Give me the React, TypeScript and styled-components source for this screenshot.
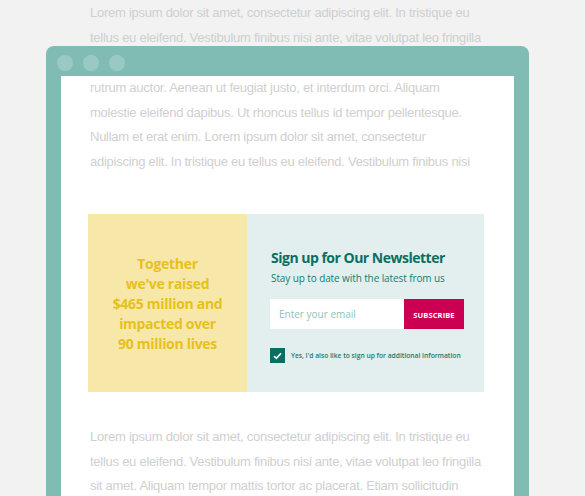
import React from 'react';
import styled, { createGlobalStyle } from 'styled-components';

const GlobalStyle = createGlobalStyle`
  html, body {
    margin: 0;
    padding: 0;
    background: #f2f2f2;
    overflow: hidden;
  }
  * {
    box-sizing: border-box;
  }
`;

const bodyFont = `"Liberation Sans", Arial, sans-serif`;
const headFont = `"Open Sans", "Noto Sans", sans-serif`;

const topLines = [
  'Lorem ipsum dolor sit amet, consectetur adipiscing elit. In tristique eu',
  'tellus eu eleifend. Vestibulum finibus nisi ante, vitae volutpat leo fringilla',
];

const innerLines = [
  'rutrum auctor. Aenean ut feugiat justo, et interdum orci. Aliquam',
  'molestie eleifend dapibus. Ut rhoncus tellus id tempor pellentesque.',
  'Nullam et erat enim. Lorem ipsum dolor sit amet, consectetur',
  'adipiscing elit. In tristique eu tellus eu eleifend. Vestibulum finibus nisi',
];

const bottomLines = [
  'Lorem ipsum dolor sit amet, consectetur adipiscing elit. In tristique eu',
  'tellus eu eleifend. Vestibulum finibus nisi ante, vitae volutpat leo fringilla',
  'sit amet. Aliquam tempor mattis tortor ac placerat. Etiam sollicitudin',
];

const Page = styled.div`
  height: 496px;
  overflow: hidden;
  font-family: ${bodyFont};
`;

const Copy = styled.div<{ top?: number }>`
  margin-top: ${({ top }) => top ?? 0}px;
  padding-left: 2px;
  font-size: 13px;
  line-height: 24.5px;
  letter-spacing: -0.26px;
  color: #cfcfcf;
  white-space: nowrap;
`;

const TopCopy = styled.div`
  padding: 1px 0 0 88px;
  height: 49px;
`;

const Frame = styled.div`
  position: relative;
  margin: -3px 0 0 46px;
  width: 483px;
  background: #80bcb4;
  border-radius: 8px 8px 0 0;
  padding: 0 15px;
`;

const FrameBar = styled.div`
  height: 33px;
  margin: 0 -15px;
  padding-left: 11px;
  display: flex;
  align-items: center;
  gap: 10px;
`;

const Dot = styled.span`
  width: 16px;
  height: 16px;
  border-radius: 50%;
  background: #9ac9c3;
`;

const FrameBody = styled.div`
  background: #fff;
  padding: 0 30px 40px 27px;
  min-height: 420px;
`;

const Signup = styled.section`
  margin-top: 40px;
  display: grid;
  grid-template-columns: 159px 1fr;
  height: 178px;
`;

const Impact = styled.div`
  background: #f7e8a9;
  display: flex;
  align-items: center;
  justify-content: center;
  text-align: center;
  padding-top: 2px;
  font-family: ${headFont};
  font-weight: 700;
  font-size: 14px;
  line-height: 20px;
  letter-spacing: -0.3px;
  color: #e8c01c;
`;

const Newsletter = styled.div`
  background: #e3efee;
  padding: 34px 0 0 23px;
  color: #0b6e62;
`;

const Title = styled.h2`
  margin: 0;
  padding-left: 1px;
  font-family: ${headFont};
  font-size: 14px;
  line-height: 20px;
  font-weight: 700;
  letter-spacing: -0.5px;
  color: #0b6e62;
`;

const Subtitle = styled.p`
  margin: 3px 0 0 0;
  padding-left: 1px;
  font-family: ${headFont};
  font-size: 10px;
  line-height: 14px;
  letter-spacing: -0.1px;
  color: #197a6e;
`;

const Form = styled.form`
  margin-top: 14px;
  display: flex;
  height: 30px;
  width: 194px;
`;

const EmailInput = styled.input`
  flex: 1;
  min-width: 0;
  border: none;
  outline: none;
  background: #fff;
  padding: 0 9px;
  font-family: ${headFont};
  font-size: 10px;
  color: #0b6e62;
  &::placeholder {
    color: #8cc4bb;
  }
`;

const SubscribeButton = styled.button`
  width: 60px;
  border: none;
  background: #cc0052;
  color: #fff;
  font-family: ${headFont};
  font-weight: 700;
  font-size: 7.5px;
  letter-spacing: 0.1px;
  padding: 1px 0 0;
`;

const Consent = styled.label`
  margin-top: 19px;
  display: flex;
  align-items: center;
  gap: 6px;
  font-family: ${headFont};
  font-size: 6.7px;
  font-weight: 600;
  color: #197a6e;
`;

const CheckBox = styled.span`
  width: 15px;
  height: 15px;
  background: #0b6e62;
  display: flex;
  align-items: center;
  justify-content: center;
`;

const App = () => {
  return (
    <>
      <GlobalStyle />
      <Page>
        <TopCopy>
          <Copy>
            {topLines.map((line) => (
              <div key={line}>{line}</div>
            ))}
          </Copy>
        </TopCopy>
        <Frame>
          <FrameBar>
            <Dot />
            <Dot />
            <Dot />
          </FrameBar>
          <FrameBody>
            <Copy top={-3}>
              {innerLines.map((line) => (
                <div key={line}>{line}</div>
              ))}
            </Copy>
            <Signup>
              <Impact>
                Together
                <br />
                we've raised
                <br />
                $465 million and
                <br />
                impacted over
                <br />
                90 million lives
              </Impact>
              <Newsletter>
                <Title>Sign up for Our Newsletter</Title>
                <Subtitle>Stay up to date with the latest from us</Subtitle>
                <Form onSubmit={(e) => e.preventDefault()}>
                  <EmailInput type="email" placeholder="Enter your email" />
                  <SubscribeButton type="submit">SUBSCRIBE</SubscribeButton>
                </Form>
                <Consent>
                  <CheckBox>
                    <svg width="9" height="8" viewBox="0 0 9 8">
                      <path d="M1 4.2 L3.4 6.4 L8 1.3" fill="none" stroke="#fff" strokeWidth="1.6" />
                    </svg>
                  </CheckBox>
                  Yes, I'd also like to sign up for additional information
                </Consent>
              </Newsletter>
            </Signup>
            <Copy top={33}>
              {bottomLines.map((line) => (
                <div key={line}>{line}</div>
              ))}
            </Copy>
          </FrameBody>
        </Frame>
      </Page>
    </>
  );
};

export default App;
